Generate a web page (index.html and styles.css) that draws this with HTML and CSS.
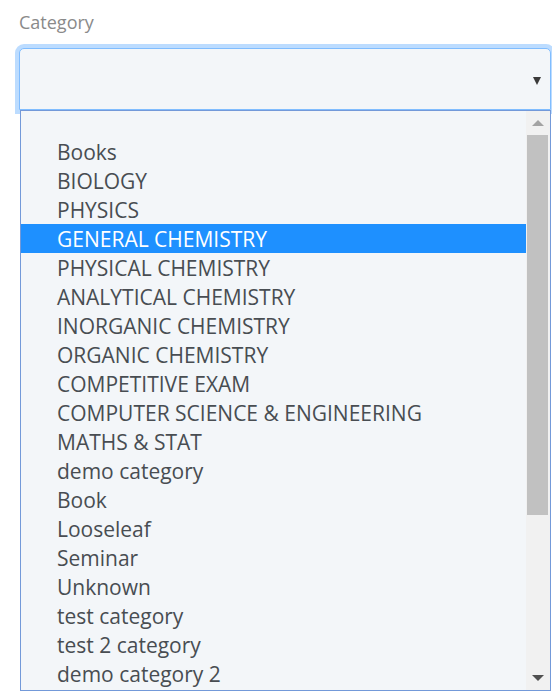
FILE: index.html
```html
<!DOCTYPE html>
<html>
<head>
<meta charset="utf-8">
<link rel="stylesheet" href="styles.css">
</head>
<body>
<div class="field">
  <label class="label">Category</label>
  <div class="select">
    <span class="caret"></span>
  </div>
  <div class="listbox">
    <ul class="options">
      <li class="option">Books</li>
      <li class="option">BIOLOGY</li>
      <li class="option">PHYSICS</li>
      <li class="option selected">GENERAL CHEMISTRY</li>
      <li class="option">PHYSICAL CHEMISTRY</li>
      <li class="option">ANALYTICAL CHEMISTRY</li>
      <li class="option">INORGANIC CHEMISTRY</li>
      <li class="option">ORGANIC CHEMISTRY</li>
      <li class="option">COMPETITIVE EXAM</li>
      <li class="option">COMPUTER SCIENCE &amp; ENGINEERING</li>
      <li class="option">MATHS &amp; STAT</li>
      <li class="option">demo category</li>
      <li class="option">Book</li>
      <li class="option">Looseleaf</li>
      <li class="option">Seminar</li>
      <li class="option">Unknown</li>
      <li class="option">test category</li>
      <li class="option">test 2 category</li>
      <li class="option">demo category 2</li>
    </ul>
    <div class="scrollbar">
      <span class="sb-btn"><span class="sb-up"></span></span>
      <span class="sb-thumb"></span>
      <span class="sb-track"></span>
      <span class="sb-btn"><span class="sb-down"></span></span>
    </div>
  </div>
</div>
</body>
</html>
```

FILE: styles.css
```css
html, body {
  margin: 0;
  padding: 0;
  background: #ffffff;
  font-family: "Open Sans", "Liberation Sans", sans-serif;
}
.field {
  padding: 10px 0 0 19px;
  display: flex;
  flex-direction: column;
  width: 532px;
}
.label {
  font-size: 18px;
  line-height: 24px;
  color: #8a8a8a;
  margin-bottom: 14px;
}
.select {
  height: 62px;
  box-sizing: border-box;
  border: 1px solid #80bdff;
  border-radius: 5px 5px 0 0;
  background: #f3f6f9;
  box-shadow: 0 0 0 4px #bcdcff;
  display: flex;
  align-items: center;
  justify-content: flex-end;
  padding-right: 9px;
  position: relative;
  z-index: 1;
}
.caret {
  width: 0;
  height: 0;
  border-left: 4.5px solid transparent;
  border-right: 4.5px solid transparent;
  border-top: 8px solid #3a3a3a;
  margin-top: 3px;
}
.listbox {
  position: relative;
  z-index: 2;
  margin-left: 1px;
  width: 531px;
  height: 581px;
  box-sizing: border-box;
  border: 1px solid #7399d9;
  background: #f3f6f9;
  display: flex;
}
.options {
  list-style: none;
  margin: 0;
  padding: 26px 0 0 0;
  flex: 1;
  overflow: hidden;
}
.option {
  height: 29px;
  box-sizing: border-box;
  padding-top: 1px;
  line-height: 28px;
  font-size: 21px;
  color: #484d52;
  padding-left: 36px;
  white-space: nowrap;
}
.option.selected {
  background: #1e90ff;
  color: #ffffff;
}
.scrollbar {
  width: 24px;
  background: #f1f1f1;
  display: flex;
  flex-direction: column;
}
.sb-btn {
  height: 24px;
  display: flex;
  align-items: center;
  justify-content: center;
}
.sb-up {
  width: 0;
  height: 0;
  border-left: 6px solid transparent;
  border-right: 6px solid transparent;
  border-bottom: 6px solid #a3a3a3;
}
.sb-down {
  width: 0;
  height: 0;
  border-left: 6px solid transparent;
  border-right: 6px solid transparent;
  border-top: 6px solid #505050;
}
.sb-thumb {
  height: 380px;
  margin: 0 2px 0 1px;
  background: #c1c1c1;
}
.sb-track {
  flex: 1;
}
```
